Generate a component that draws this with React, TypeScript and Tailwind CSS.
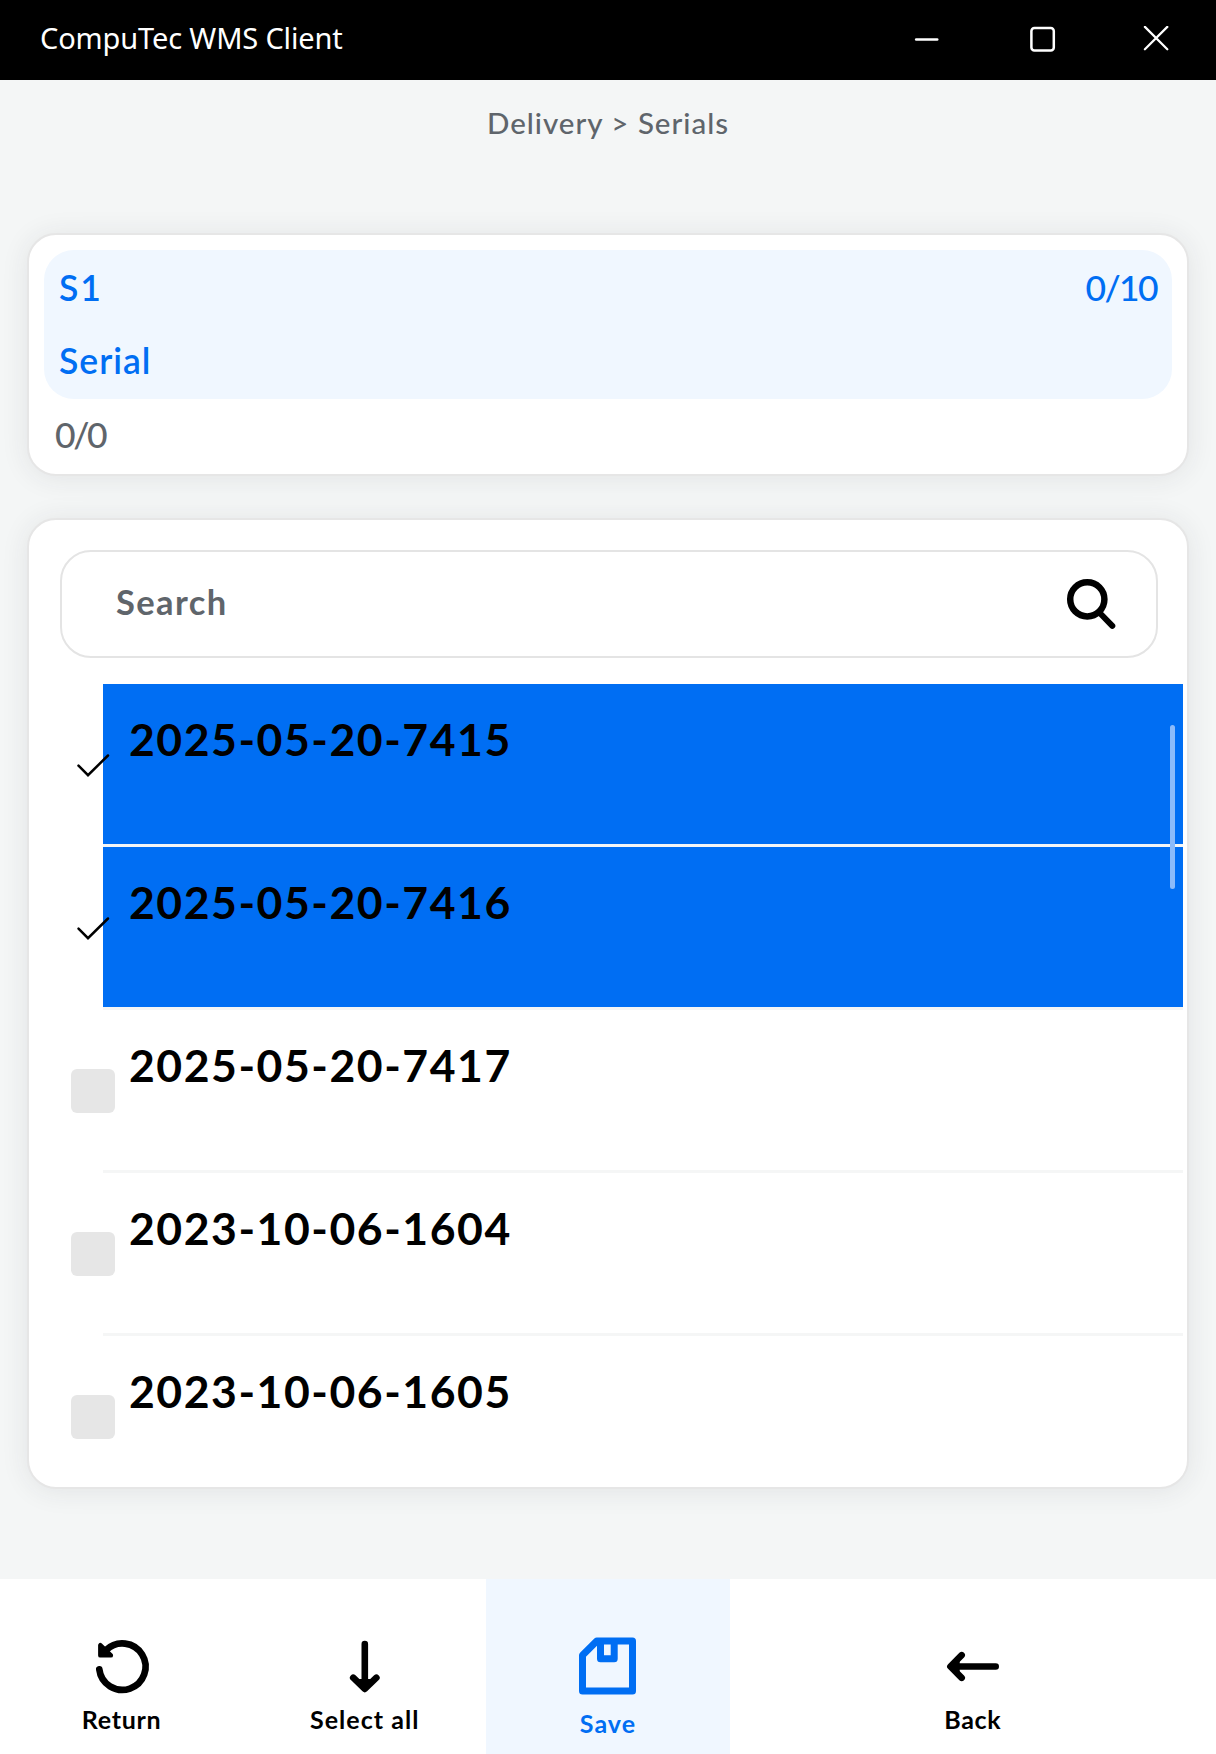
import React, { useState } from 'react';

interface Serial {
  id: number;
  name: string;
}

const serials: Serial[] = [
  { id: 1, name: "2025-05-20-7415" },
  { id: 2, name: "2025-05-20-7416" },
  { id: 3, name: "2025-05-20-7417" },
  { id: 4, name: "2023-10-06-1604" },
  { id: 5, name: "2023-10-06-1605" },
];

const ReturnIcon = () => (
  <svg width="60" height="60" viewBox="0 0 60 60" fill="none" stroke="currentColor" strokeWidth="6.7" strokeLinecap="round" strokeLinejoin="round">
    <path d="M7.3 32.4A23.2 23.2 0 1 0 14.2 13" />
    <path d="M8.3 8.2V18.4H18.9Z" fill="currentColor" strokeWidth="4.4" />
  </svg>
);

const DownIcon = () => (
  <svg width="60" height="60" viewBox="0 0 60 60" fill="none" stroke="currentColor" strokeWidth="6.6" strokeLinecap="round" strokeLinejoin="round">
    <path d="M29.8 7V51M18.2 40.7L29.8 51.9L41.4 40.7" />
    <path d="M25 44L29.8 50L34.6 44Z" fill="currentColor" strokeWidth="4" />
  </svg>
);

const SaveIcon = () => (
  <svg width="60" height="60" viewBox="0 0 60 60" fill="none" stroke="currentColor" strokeWidth="7" strokeLinejoin="round">
    <path d="M18.8 4H54.5V54H4.5V18.3Z" />
    <path d="M22.5 4V21.7H36.2V4" />
  </svg>
);

const BackIcon = () => (
  <svg width="60" height="60" viewBox="0 0 60 60" fill="none" stroke="currentColor" strokeWidth="6.6" strokeLinecap="round" strokeLinejoin="round">
    <path d="M52.7 29.5H8.7M18.7 18.2L7.4 29.5L18.7 40.8" />
    <path d="M14.7 24.7L9 29.5L14.7 34.3Z" fill="currentColor" strokeWidth="4" />
  </svg>
);

const TitleBar = () => (
  <header className="flex h-20 shrink-0 items-center justify-between bg-black pl-10 pr-[47px] text-white">
    <h1 className="pb-[5px] font-['Noto_Sans'] text-[29px] leading-10 tracking-[-0.15px]">CompuTec WMS Client</h1>
    <div className="flex items-center pb-[3px]">
      <svg className="mr-[91px]" width="26" height="26" viewBox="0 0 26 26" fill="none" stroke="currentColor" strokeWidth="2.6" strokeLinecap="round">
        <path d="M3.2 13.5H24.2" />
      </svg>
      <svg className="mr-[87px]" width="26" height="26" viewBox="0 0 26 26" fill="none" stroke="currentColor" strokeWidth="2.5">
        <rect x="1.4" y="2" width="22.4" height="22.4" rx="3" />
      </svg>
      <svg width="26" height="26" viewBox="0 0 26 26" fill="none" stroke="currentColor" strokeWidth="2.2" strokeLinecap="round">
        <path d="M1.9 .9L24.3 23.3M24.3 .9L1.9 23.3" />
      </svg>
    </div>
  </header>
);

const Summary = () => (
  <section className="mx-[27px] mt-[67px] h-[243px] shrink-0 rounded-[29px] border-2 border-[#e6e6e6] bg-white px-[15px] pt-[15px] text-[35.5px] font-semibold leading-[73px] shadow-[0_2px_28px_rgba(40,40,60,0.09)]">
    <div className="h-[149px] rounded-[30px] bg-[#f0f7ff] px-[15px] pt-px text-[#006ef3]">
      <div className="flex justify-between">
        <span className="tracking-[2px]">S1</span>
        <span className="font-medium tracking-[-1.6px]">0/10</span>
      </div>
      <div className="tracking-[1px]">Serial</div>
    </div>
    <div className="pl-[11px] font-medium leading-[71px] tracking-[-2.4px] text-[#5f656b]">0/0</div>
  </section>
);

const SearchBox = () => (
  <div className="ml-[31px] mr-[29px] flex h-[108px] shrink-0 items-center justify-between rounded-[31px] border-2 border-[#e4e4e4] pl-[54px] pr-[38px]">
    <span className="pb-1 text-[34.5px] font-bold leading-10 tracking-[1.4px] text-[#5f656b]">Search</span>
    <svg width="54" height="54" viewBox="0 0 54 54" fill="none" stroke="currentColor" strokeWidth="6.5" strokeLinecap="round">
      <circle cx="23.3" cy="22.3" r="17.1" />
      <path d="M36.3 36.5L48.3 48.8" strokeWidth="6" />
    </svg>
  </div>
);

const SerialRow = ({ name, checked, onToggle }: { name: string; checked: boolean; onToggle: () => void }) => (
  <li className="relative h-[163px] pl-[74px]" onClick={onToggle}>
    <div className={`h-40 pl-[26px] text-[44.5px] font-bold leading-[109px] tracking-[1.55px] ${checked ? 'bg-[#006ef3]' : ''}`}>
      {name}
    </div>
    <div className="h-[3px] bg-[#f5f6f6]" />
    {/* The tick hangs over the left edge of the highlighted row */}
    {checked ? (
      <svg className="absolute left-[42px] top-[59px]" width="44" height="44" viewBox="0 0 44 44" fill="none" stroke="currentColor" strokeWidth="2.5" strokeLinecap="round">
        <path d="M7.5 22.7L17 32.2L37 12.5" />
      </svg>
    ) : (
      <span className="absolute left-[42px] top-[59px] h-11 w-11 rounded-md bg-[#e6e6e6]" />
    )}
  </li>
);

export default function App() {
  const [selected, setSelected] = useState<number[]>([1, 2]);

  const toggle = (id: number) =>
    setSelected(selected.includes(id) ? selected.filter(s => s !== id) : [...selected, id]);

  return (
    <div className="flex h-[1754px] w-[1216px] flex-col overflow-hidden bg-[#f4f6f6] font-[Lato,'Noto_Sans',sans-serif] text-black">
      <TitleBar />
      <div className="h-[86px] shrink-0 text-center text-[29.5px] font-medium leading-[86px] tracking-[1px] text-[#5f656b]">
        Delivery &gt; Serials
      </div>

      <Summary />

      {/* --- Serial list --- */}
      <section className="mx-[27px] mt-[42px] flex h-[971px] shrink-0 flex-col rounded-[29px] border-2 border-[#e6e6e6] bg-white pt-[30px] shadow-[0_2px_28px_rgba(40,40,60,0.09)]">
        <SearchBox />
        <div className="relative mt-[26px] h-[800px] overflow-hidden rounded-b-[27px] pr-1">
          <ul>
            {serials.map(s => (
              <SerialRow key={s.id} name={s.name} checked={selected.includes(s.id)} onToggle={() => toggle(s.id)} />
            ))}
          </ul>
          <div className="absolute right-[12px] top-[41px] h-[164px] w-[5px] rounded-full bg-[#8cbbfa]" />
        </div>
      </section>

      {/* --- Bottom actions --- */}
      <footer className="mt-auto grid h-[175px] shrink-0 grid-cols-5 bg-white text-[25px] font-bold leading-[30px] tracking-[0.7px]">
        <button className="flex flex-col items-center gap-[7px] pt-[58px]">
          <ReturnIcon />
          Return
        </button>
        <button className="flex flex-col items-center gap-[7px] pt-[58px] tracking-[1.05px]">
          <DownIcon />
          Select all
        </button>
        <button className="flex flex-col items-center gap-[11px] bg-[#f0f7ff] pt-[58px] tracking-[1.1px] text-[#006ef3]">
          <SaveIcon />
          Save
        </button>
        <button className="col-span-2 flex flex-col items-center gap-[7px] pt-[58px]">
          <BackIcon />
          Back
        </button>
      </footer>
    </div>
  );
}
